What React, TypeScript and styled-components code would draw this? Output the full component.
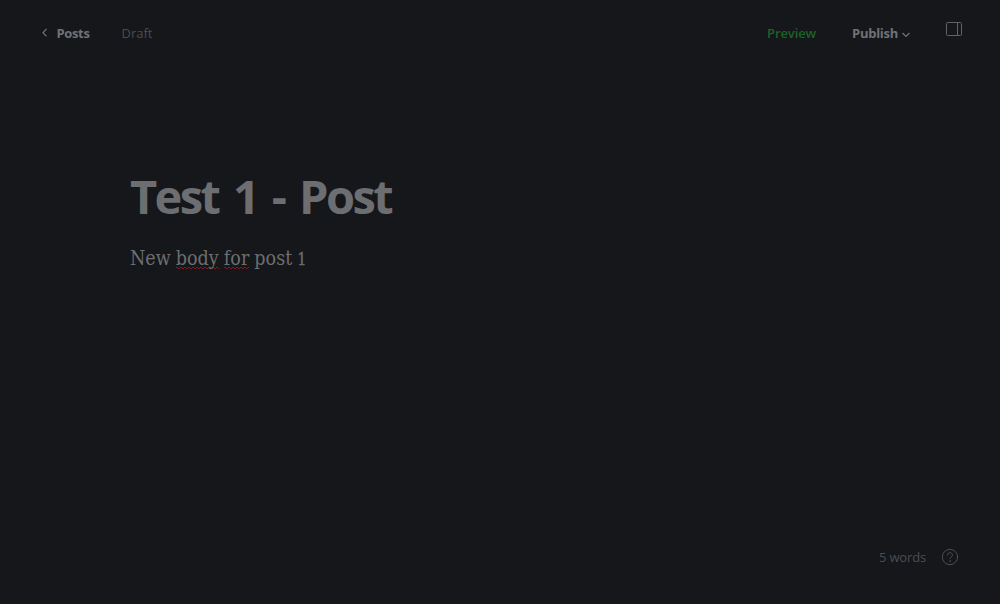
import React from 'react';
import styled, { createGlobalStyle } from 'styled-components';

const GlobalStyle = createGlobalStyle`
  *, *::before, *::after { box-sizing: border-box; }
  html, body { margin: 0; background: #15171a; }
  body { overflow: hidden; font-family: "Open Sans", "Noto Sans", sans-serif; }
  svg { display: block; flex: none; }
`;

const Page = styled.div`
  display: flex;
  flex-direction: column;
  height: 100vh;
  background: #15171a;
`;

const Header = styled.header`
  display: flex;
  justify-content: space-between;
  height: 66px;
  padding: 0 38px 0 41px;
`;

const Group = styled.div<{ $gap: number }>`
  display: flex;
  align-items: center;
  gap: ${(p) => p.$gap}px;
  height: 66px;
`;

const Item = styled.a<{ $color: string; $weight: number; $spacing: string }>`
  display: flex;
  align-items: center;
  color: ${(p) => p.$color};
  font-size: 13px;
  line-height: 20px;
  font-weight: ${(p) => p.$weight};
  letter-spacing: ${(p) => p.$spacing};
  white-space: nowrap;
`;

const BackIcon = styled.svg`
  margin-right: 7.5px;
`;

const Caret = styled.svg`
  margin: 4px 0 0 4px;
`;

const SidebarIcon = styled.svg`
  margin-bottom: 8px;
`;

const Editor = styled.main`
  flex: 1;
  padding: 98px 130px 0;
`;

const Title = styled.h1`
  margin: 0;
  color: #6c6e71;
  font-size: 47px;
  line-height: 64px;
  font-weight: 700;
  letter-spacing: -2.6px;
  word-spacing: 5px;
`;

const Body = styled.p`
  margin: 15px 0 0;
  color: #6c6e71;
  font-family: "DejaVu Serif Condensed", "DejaVu Serif", serif;
  font-stretch: condensed;
  font-size: 19.5px;
  line-height: 32px;
  word-spacing: -0.5px;
`;

const Misspelled = styled.span`
  background:
    linear-gradient(90deg, #811a20 2px, transparent 2px) 0 calc(100% - 2px) / 4px 1px repeat-x,
    linear-gradient(90deg, transparent 2px, #811a20 2px) 0 calc(100% - 1px) / 4px 1px repeat-x;
`;

const OldStyleDigit = styled.span`
  font-size: 16px;
  -webkit-text-stroke: 0.3px #6c6e71;
`;

const Footer = styled.footer`
  display: flex;
  justify-content: flex-end;
  align-items: center;
  gap: 15px;
  height: 94px;
  padding: 0 41px 0 0;
`;

export default function App() {
  return (
    <Page>
      <GlobalStyle />
      <Header>
        <Group $gap={32}>
          <Item $color="#707275" $weight={700} $spacing="-0.35px">
            <BackIcon width="8" height="10" viewBox="0 0 8 10" fill="none" stroke="#707275" strokeWidth="1.2">
              <path d="M5.500 1 2 4.700l3.500 3.700" />
            </BackIcon>
            Posts
          </Item>
          <Item as="span" $color="#4a4d52" $weight={400} $spacing="0">Draft</Item>
        </Group>
        <Group $gap={36}>
          <Item $color="#1d6329" $weight={600} $spacing="-0.1px">Preview</Item>
          <Item $color="#707275" $weight={700} $spacing="-0.28px">
            Publish
            <Caret width="8" height="6" viewBox="0 0 8 6" fill="none" stroke="#707275" strokeWidth="1.2">
              <path d="m.5 1 3.500 3.500L7.500 1" />
            </Caret>
          </Item>
          <SidebarIcon width="16" height="14" viewBox="0 0 16 14" fill="none" stroke="#606265">
            <rect x=".5" y=".5" width="15" height="13" rx="1" />
            <path d="M11.500 .5v13" />
          </SidebarIcon>
        </Group>
      </Header>
      <Editor>
        <Title>Test 1 - Post</Title>
        <Body>
          New <Misspelled>body</Misspelled> <Misspelled>for</Misspelled> post <OldStyleDigit>1</OldStyleDigit>
        </Body>
      </Editor>
      <Footer>
        <Item as="span" $color="#4a4d52" $weight={400} $spacing="-0.15px">5 words</Item>
        <svg width="18" height="18" viewBox="0 0 18 18" fill="none" stroke="#4a4d52" strokeLinecap="round">
          <circle cx="9" cy="9" r="7.700" />
          <path d="M6.500 7a2.500 2.300 0 1 1 3.700 2c-.8.400-1.200.8-1.200 1.700" />
          <circle cx="9" cy="13" r=".3" />
        </svg>
      </Footer>
    </Page>
  );
}
